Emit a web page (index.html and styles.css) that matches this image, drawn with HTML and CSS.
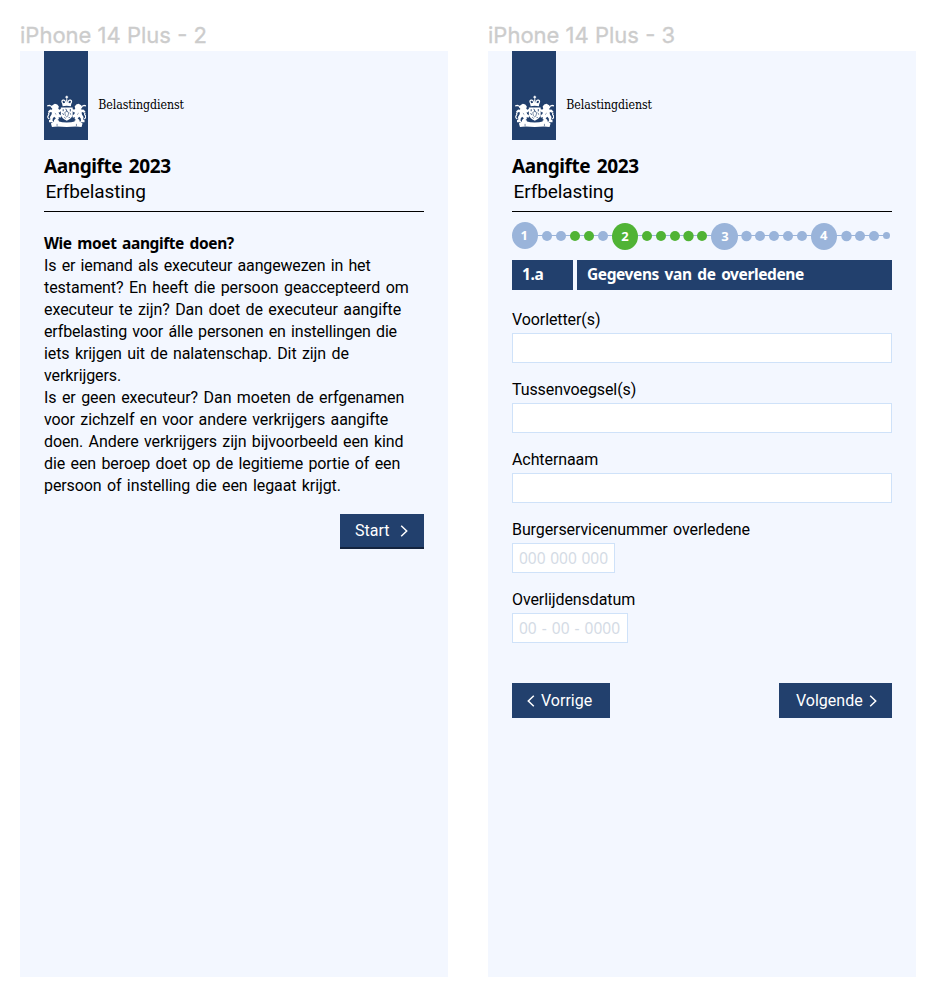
FILE: index.html
```html
<!DOCTYPE html>
<html lang="nl">
<head>
<meta charset="utf-8">
<title>Aangifte Erfbelasting</title>
<link rel="stylesheet" href="styles.css">
</head>
<body>
<svg width="0" height="0" class="defs">
  <defs>
    <symbol id="lion" viewBox="0 0 15 24">
      <path d="M.2 5.8 2.4 5.4 4.4 6.2 5.2 7.8" fill="none" stroke="#fff" stroke-width="1.2"/>
      <path d="M5.4 5.2 8 3.6 10.4 4.4 12 6.4 11.4 8.8 12.6 9.8 14.4 8.6 14.6 10.8 12.6 12.4 11.8 12 12.2 14 14.4 15.6 13.8 17.8 11.8 17 12 19 10.6 20.2 12 20.6 12 22.4 6.8 22.4 7.2 20 9 18.4 7.2 16.8 5.8 18.6 5.6 20.6 6.6 22.4 2 22.4 2 20.4 3.4 19.6 3 17 4.6 14.6 5 12.4 3.6 11.9 2.6 13 1 11.4 3.2 9.4 5 9.8 5.4 8.6 4.4 7.4Z" fill="#fff"/>
      <path d="M2.4 19.2Q-.2 17.4 1.4 15.4 2.6 14 1.2 12.8" fill="none" stroke="#fff" stroke-width="1.2"/>
      <path d="M8 13.2 9.4 14.6" stroke="#22406d" stroke-width=".6"/>
    </symbol>
    <symbol id="arms" viewBox="0 0 40 33">
      <g fill="none" stroke="#fff" stroke-width="1.2">
        <path d="M20 .6v3M18.6 2h2.8"/>
        <path d="M16.6 9.2Q13.8 6 16.2 5 18.6 4.4 18.8 8M23.4 9.2Q26.2 6 23.8 5 21.4 4.4 21.2 8M20 4v4.6"/>
      </g>
      <path d="M15.4 8.4Q20 7 24.6 8.4L24.2 11.2Q20 10.2 15.8 11.2Z" fill="#fff"/>
      <path d="M14 12.4H26V20Q25 23.6 20 25.8 15 23.6 14 20Z" fill="#fff"/>
      <path d="M16.4 14.2v2M19 13.8l1.6 3M23.6 14v2.4M15.6 18.6l1.6 1M23 18.2l1.4 1.4M17.6 22.4l1.2 1M22 22l.8 1" stroke="#22406d" stroke-width=".9"/>
      <path d="M18 17.4 20 16.4 22 17.6 21.2 21 20 22 18.6 20.6Z" fill="none" stroke="#22406d" stroke-width=".6"/>
      <use href="#lion" x="0" y="5" width="15" height="24"/>
      <use href="#lion" x="0" y="5" width="15" height="24" transform="translate(40 0) scale(-1 1)"/>
      <path d="M6.4 27 11 26.4Q20 29 29 26.4L33.6 27 36 28.6 35 32.2 29.4 31.6Q20 32.6 10.6 31.6L5 32.2 4 28.6Z" fill="#fff"/>
      <path d="M10.2 29V31.2M29.8 29V31.2" fill="none" stroke="#22406d" stroke-width=".6"/>
    </symbol>
  </defs>
</svg>
<main class="board">
  <section class="frame">
    <h2 class="frame-name">iPhone 14 Plus - 2</h2>
    <div class="phone">
      <header class="brand">
        <div class="ribbon"><svg class="arms"><use href="#arms"/></svg></div>
        <span class="brand-name">Belastingdienst</span>
      </header>
      <div class="heading">
        <h1 class="title">Aangifte 2023</h1>
        <p class="subtitle">Erfbelasting</p>
      </div>
      <article class="intro">
        <h3 class="question">Wie moet aangifte doen?</h3>
        <p class="copy"><span class="tight">Is er iemand als executeur aangewezen in het</span><br><span class="loose">testament? En heeft die persoon geaccepteerd om</span><br><span class="loose">executeur te zijn? Dan doet de executeur aangifte</span><br><span class="tight">erfbelasting voor álle personen en instellingen die</span><br>iets krijgen uit de nalatenschap. Dit zijn de<br>verkrijgers.<br><span class="loose">Is er geen executeur? Dan moeten de erfgenamen</span><br>voor zichzelf en voor andere verkrijgers aangifte<br>doen. Andere verkrijgers zijn bijvoorbeeld een kind<br>die een beroep doet op de legitieme portie of een<br>persoon of instelling die een legaat krijgt.</p>
      </article>
      <button class="btn start"><span>Start</span><svg class="chev" viewBox="0 0 8 12"><path d="M1.2 .8 6.7 6 1.2 11.2"/></svg></button>
    </div>
  </section>
  <section class="frame">
    <h2 class="frame-name">iPhone 14 Plus - 3</h2>
    <div class="phone">
      <header class="brand">
        <div class="ribbon"><svg class="arms"><use href="#arms"/></svg></div>
        <span class="brand-name">Belastingdienst</span>
      </header>
      <div class="heading">
        <h1 class="title">Aangifte 2023</h1>
        <p class="subtitle">Erfbelasting</p>
      </div>
      <svg class="steps" viewBox="0 0 380 30">
        <path class="track" d="M13 14.5H374"/>
        <g class="todo">
          <ellipse cx="13" cy="14.5" rx="13" ry="13.5"/><circle cx="35" cy="15" r="5"/><circle cx="49" cy="15" r="5"/><circle cx="91" cy="15" r="5"/>
          <circle cx="212.5" cy="15.5" r="13.5"/><circle cx="234.5" cy="15" r="5.2"/><circle cx="248" cy="15" r="5"/><circle cx="262" cy="15" r="5"/><circle cx="276" cy="15" r="5"/><circle cx="290" cy="15" r="5"/>
          <ellipse cx="312" cy="15.5" rx="13" ry="13.5"/><circle cx="334.5" cy="15" r="5.2"/><circle cx="348" cy="15" r="5"/><circle cx="362" cy="15" r="5"/><circle cx="374.5" cy="14.5" r="3.5"/>
        </g>
        <g class="done">
          <circle cx="63" cy="15" r="5"/><circle cx="77" cy="15" r="5"/><ellipse cx="113" cy="15.5" rx="13" ry="13.5"/>
          <circle cx="135" cy="15" r="5"/><circle cx="149" cy="15" r="5"/><circle cx="163" cy="15" r="5"/><circle cx="176.5" cy="15" r="5.2"/><circle cx="190" cy="15" r="5"/>
        </g>
        <g class="nums"><text x="12.3" y="19.2">1</text><text x="113" y="20">2</text><text x="213" y="20">3</text><text x="311.7" y="19.4">4</text></g>
      </svg>
      <div class="bar"><span class="bar-no">1.a</span><span class="bar-title">Gegevens van de overledene</span></div>
      <form class="form">
        <label class="field"><span>Voorletter(s)</span><span class="box"></span></label>
        <label class="field"><span>Tussenvoegsel(s)</span><span class="box"></span></label>
        <label class="field"><span>Achternaam</span><span class="box"></span></label>
        <label class="field"><span>Burgerservicenummer overledene</span><span class="box bsn">000 000 000</span></label>
        <label class="field"><span>Overlijdensdatum</span><span class="box date">00 - 00 - 0000</span></label>
      </form>
      <nav class="actions">
        <button class="btn prev"><svg class="chev" viewBox="0 0 8 12"><path d="M6.8 .8 1.3 6 6.8 11.2"/></svg><span>Vorrige</span></button>
        <button class="btn next"><span>Volgende</span><svg class="chev" viewBox="0 0 8 12"><path d="M1.2 .8 6.7 6 1.2 11.2"/></svg></button>
      </nav>
    </div>
  </section>
</main>
</body>
</html>
```
FILE: styles.css
```css
* { box-sizing: border-box; }
body { margin: 0; width: 948px; height: 1008px; background: #fff; color: #000; font: 16px/22px Roboto, sans-serif; overflow: hidden; }
h1, h2, h3, p { margin: 0; }
.defs { display: block; }
.board { display: flex; gap: 40px; padding: 21px 20px 0; }
.frame { width: 428px; }
.frame-name { height: 30px; font: 400 22px/28px Inter, sans-serif; color: #ccc; -webkit-text-stroke: .3px #ccc; white-space: nowrap; }
.phone { height: 926px; padding: 0 24px; background: #f3f7ff; }
.brand { display: flex; height: 88.5px; }
.ribbon { width: 44.3px; height: 88.5px; padding: 44px 0 0 2.5px; background: #22406d; }
.arms { display: block; width: 39.5px; height: 33px; }
.brand-name { margin: 43.5px 0 0 10px; font: 12.3px/20px "DejaVu Serif Condensed", "DejaVu Serif", serif; font-stretch: condensed; white-space: nowrap; letter-spacing: -.1px; }
.heading { height: 72.5px; padding-top: 14.5px; border-bottom: 1px solid #000; }
.title { font: 700 19px/25px "Noto Sans", sans-serif; letter-spacing: -.4px; word-spacing: 2px; }
.subtitle { padding-left: 1.5px; font-size: 19px; line-height: 25px; letter-spacing: -.1px; }
.intro { padding-top: 20px; white-space: nowrap; }
.question { font: 700 15.5px/22px "Noto Sans", sans-serif; letter-spacing: -.4px; word-spacing: 2px; }
.copy { padding-top: .5px; letter-spacing: -.09px; word-spacing: 1.5px; }
.tight { letter-spacing: -.15px; }
.loose { letter-spacing: -.05px; }
.btn { display: flex; align-items: center; height: 35px; margin: 0; border: 0; border-radius: 0; background: #22406d; color: #fff; font: 16px/22px Roboto, sans-serif; white-space: nowrap; }
.chev { width: 8px; height: 12px; margin-top: 1px; fill: none; stroke: #fff; stroke-width: 1.5; }
.start { width: 84px; margin: 17.5px 0 0 auto; padding: 0 16px 0 15px; justify-content: space-between; border-bottom: 2px solid #14243f; }
.steps { display: block; width: 380px; height: 30px; margin-top: 9px; }
.track { stroke: #9ab4da; stroke-width: 1; }
.todo { fill: #9ab4da; }
.done { fill: #50b335; }
.nums { fill: #fff; font: 700 13px "Noto Sans", sans-serif; text-anchor: middle; }
.bar { display: grid; grid-template-columns: 61px 315px; gap: 4px; height: 30px; margin-top: 9px; color: #fff; font: 700 15.5px/29px "Noto Sans", sans-serif; letter-spacing: -.4px; word-spacing: 2px; }
.bar span { padding-left: 10px; background: #22406d; white-space: nowrap; }
.form { display: flex; flex-direction: column; gap: 15px; padding-top: 18.5px; }
.field { display: flex; flex-direction: column; height: 55px; letter-spacing: -.09px; word-spacing: 1.5px; }
.box { height: 30px; margin-top: 2.5px; padding-left: 6px; border: 1px solid #cfe2f9; background: #fff; color: #d4dbe5; font: 15.5px/28px "Noto Sans", sans-serif; letter-spacing: 0; word-spacing: .6px; white-space: nowrap; }
.bsn { width: 103px; }
.date { width: 116px; word-spacing: 1px; }
.actions { display: flex; justify-content: space-between; padding-top: 39.5px; }
.prev { width: 98px; padding: 0 0 0 15px; gap: 6px; }
.next { width: 113px; padding: 0 15px 0 17px; justify-content: space-between; }
```
